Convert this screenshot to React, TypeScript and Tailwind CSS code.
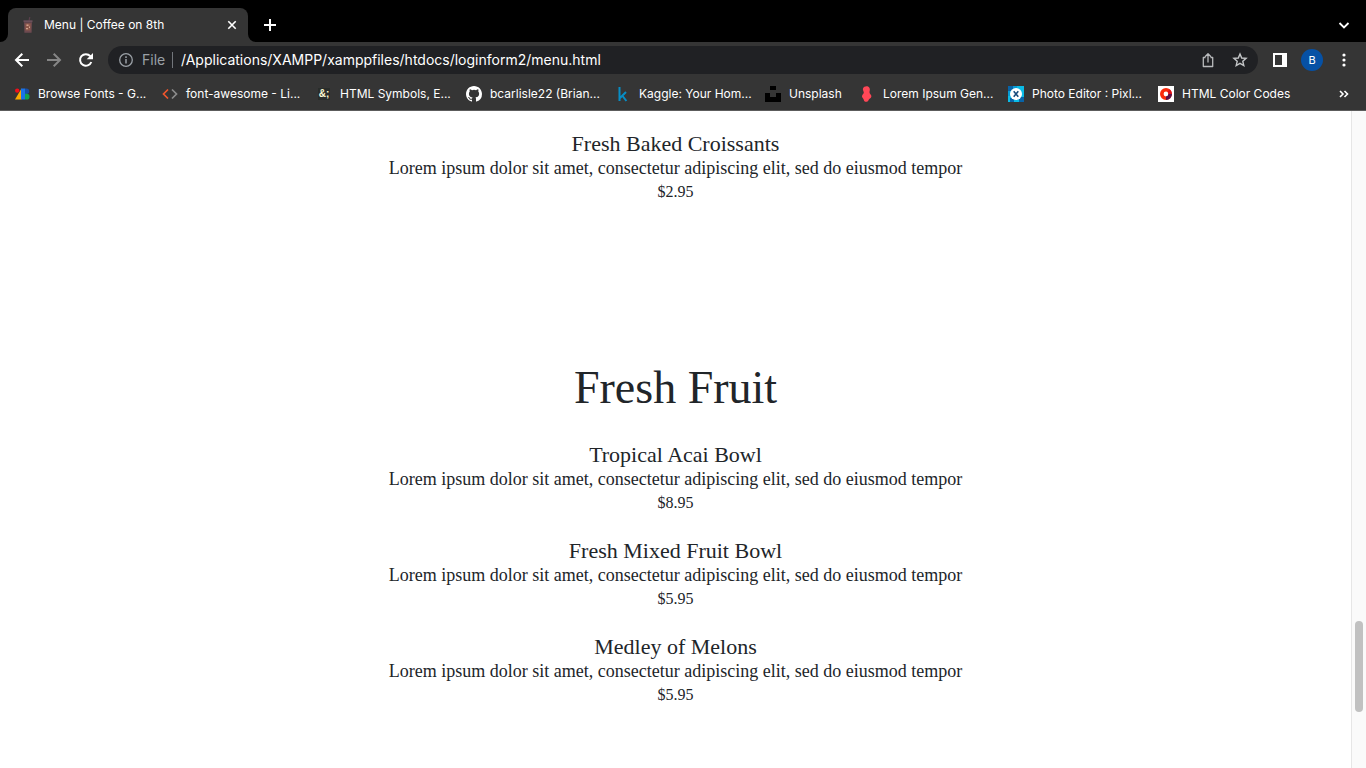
import type { ReactNode } from "react";

const DESCRIPTION =
  "Lorem ipsum dolor sit amet, consectetur adipiscing elit, sed do eiusmod tempor";

type Dish = { name: string; price: string };

const pastries: Dish[] = [{ name: "Fresh Baked Croissants", price: "$2.95" }];

const fruit: Dish[] = [
  { name: "Tropical Acai Bowl", price: "$8.95" },
  { name: "Fresh Mixed Fruit Bowl", price: "$5.95" },
  { name: "Medley of Melons", price: "$5.95" },
];

function Icon({ children }: { children: ReactNode }) {
  return (
    <svg viewBox="0 0 16 16" className="size-4 shrink-0" aria-hidden="true">
      {children}
    </svg>
  );
}

const bookmarks: { label: string; width: string; icon: ReactNode }[] = [
  {
    label: "Browse Fonts - G...",
    width: "w-[108px]",
    icon: (
      <Icon>
        <path d="M7.5 2.500v11H1z" fill="#fbab00" />
        <path d="M7 2.500h4v11H7z" fill="#1a73e8" />
        <circle cx="3.2" cy="4.6" r="2.2" fill="#f00f1a" />
        <path d="M11 2.500h1.500a2.700 2.700 0 0 1 0 5.400H11z" fill="#174ea6" />
        <path d="M11 7.800h1.700a2.850 2.850 0 0 1 0 5.700H11z" fill="#12a150" />
      </Icon>
    ),
  },
  {
    label: "font-awesome - Li...",
    width: "w-[114px]",
    icon: (
      <Icon>
        <path d="M6 3.5 1.5 8 6 12.5" fill="none" stroke="#f0562d" strokeWidth="1.7" />
        <path d="M10 3.5 14.5 8 10 12.5" fill="none" stroke="#8c8c8c" strokeWidth="1.7" />
      </Icon>
    ),
  },
  {
    label: "HTML Symbols, E...",
    width: "w-[110px]",
    icon: (
      <span className="flex size-4 shrink-0 items-center justify-center font-['Liberation_Sans',sans-serif] text-[10px] font-bold text-[#fbfbd5]">
        <span className="flex h-3 w-3 items-center justify-center bg-[#292d2b]">&amp;;</span>
      </span>
    ),
  },
  {
    label: "bcarlisle22 (Brian...",
    width: "w-[109px]",
    icon: (
      <Icon>
        <path
          fill="#fff"
          d="M8 0C3.58 0 0 3.58 0 8c0 3.54 2.29 6.53 5.47 7.59.4.07.55-.17.55-.38 0-.19-.01-.82-.01-1.49-2.01.37-2.53-.49-2.69-.94-.09-.23-.48-.94-.82-1.13-.28-.15-.68-.52-.01-.53.63-.01 1.08.58 1.23.82.72 1.21 1.87.87 2.33.66.07-.52.28-.87.51-1.07-1.78-.2-3.64-.89-3.64-3.95 0-.87.31-1.59.82-2.15-.08-.2-.36-1.02.08-2.12 0 0 .67-.21 2.2.82a7.42 7.42 0 0 1 4 0c1.53-1.04 2.2-.82 2.2-.82.44 1.1.16 1.92.08 2.12.51.56.82 1.27.82 2.15 0 3.07-1.87 3.75-3.65 3.95.29.25.54.73.54 1.48 0 1.07-.01 1.93-.01 2.2 0 .21.15.46.55.38A8.01 8.01 0 0 0 16 8c0-4.42-3.58-8-8-8z"
        />
      </Icon>
    ),
  },
  {
    label: "Kaggle: Your Hom...",
    width: "w-[110px]",
    icon: (
      <Icon>
        <path d="M4.500 1v14M11 6l-6 6M7.200 9.500l4.200 5.500" fill="none" stroke="#078dc5" strokeWidth="2" />
      </Icon>
    ),
  },
  {
    label: "Unsplash",
    width: "w-[54px]",
    icon: (
      <Icon>
        <path d="M5 0h6v4H5zM0 7h5v4h6V7h5v9H0z" fill="#000" />
      </Icon>
    ),
  },
  {
    label: "Lorem Ipsum Gen...",
    width: "w-[109px]",
    icon: (
      <Icon>
        <path
          d="M4 2.500C4.800.2 8.800-.5 10.200 1.600c1 1.300.6 2.500.4 3.600-.2 1.200-.2 2 .8 3 1.200 1.200 1.300 2.800.3 3.700-1.300 1-1.600.9-2.200 2.400-.9 2-4 2-4.600 0-.3-1-.4-1.300-1-2-1.100-1.100-1.300-2.400-.2-3.700.9-1 1.300-1.600 1-2.600-.4-1.200-1.100-2.200-.7-3.500z"
          fill="#ff4757"
        />
      </Icon>
    ),
  },
  {
    label: "Photo Editor : Pixl...",
    width: "w-[110px]",
    icon: (
      <Icon>
        <path d="M0 0h16v16H0z" fill="#0abbe6" />
        <path d="M0 0h5v5H0zM11 11h5v5h-5zM2 12h4v4H2z" fill="#0864a8" />
        <path d="M5 0h4v3H5zM0 5h2v5H0z" fill="#079bd4" />
        <circle cx="8" cy="8" r="6" fill="#fff" />
        <path d="m5.700 5.200 4.600 5.600M10.300 5.200l-4.600 5.600" stroke="#164b7c" strokeWidth="1.6" />
      </Icon>
    ),
  },
  {
    label: "HTML Color Codes",
    width: "w-[110px]",
    icon: (
      <Icon>
        <path d="M0 0h16v16H0z" fill="#fff" />
        <circle cx="8" cy="8" r="4.200" fill="none" stroke="#fa2a0c" strokeWidth="3.600" />
        <path d="M12.200 8A4.200 4.200 0 0 1 8 12.200" fill="none" stroke="#5c1249" strokeWidth="3.600" />
        <path d="M10.500 4.600A4.200 4.200 0 0 1 12.200 8" fill="none" stroke="#d9101c" strokeWidth="3.600" />
      </Icon>
    ),
  },
];

function TabStrip() {
  return (
    <div className="flex h-[42px] items-end bg-black">
      <div className="h-2 w-2 bg-[#353535]">
        <div className="h-2 w-2 rounded-br-lg bg-black" />
      </div>
      <div className="flex h-[34px] w-60 items-center rounded-t-lg bg-[#353535] pr-2 pl-3">
        <svg viewBox="0 0 16 16" className="size-4 shrink-0" aria-hidden="true">
          <path d="m9 4 .8-4" stroke="#5a3f4c" strokeWidth="1.200" />
          <path d="M3.500 3.300h9v1.900h-9z" fill="#6b505b" />
          <path d="M4 5.200h8l-.4 10.500H4.400z" fill="#6d4a50" />
          <path d="M5.300 6.500h5.400l-.3 7H5.600z" fill="#8e594a" />
          <path d="M6.500 7.500h2v1.500h-2zM9 9.500h1V11H9zM6 11h2v1.200H6z" fill="#d2a18d" />
        </svg>
        <span className="ml-2 flex-1 text-xs whitespace-nowrap text-white">Menu | Coffee on 8th</span>
        <button aria-label="Close tab" className="flex size-4 items-center justify-center">
          <svg viewBox="0 0 16 16" className="size-4">
            <path d="m4.300 4.300 7.400 7.400M11.700 4.300l-7.400 7.400" stroke="#fff" strokeWidth="1.6" />
          </svg>
        </button>
      </div>
      <div className="h-2 w-2 bg-[#353535]">
        <div className="h-2 w-2 rounded-bl-lg bg-black" />
      </div>
      <button aria-label="New tab" className="mb-2 ml-[5px] flex size-[18px] items-center justify-center">
        <svg viewBox="0 0 18 18" className="size-[18px]">
          <path d="M9 3v12M3 9h12" stroke="#fff" strokeWidth="2" />
        </svg>
      </button>
      <button aria-label="Search tabs" className="mr-3.5 mb-2 ml-auto flex size-4">
        <svg viewBox="0 0 16 16" className="size-4">
          <path d="m3.500 5 4.500 4.500L12.500 5" fill="none" stroke="#fff" strokeWidth="1.800" />
        </svg>
      </button>
    </div>
  );
}

function Toolbar() {
  return (
    <div className="flex h-9 items-center bg-[#353535] pl-3.5">
      <div className="flex shrink-0 gap-4">
        <button aria-label="Back">
          <svg viewBox="0 0 16 16" className="size-4">
            <path d="M15 8H2.500M8.300 1.700 2 8l6.300 6.300" fill="none" stroke="#fff" strokeWidth="2" />
          </svg>
        </button>
        <button aria-label="Forward">
          <svg viewBox="0 0 16 16" className="size-4">
            <path d="M1 8h12.500M7.700 1.700 14 8l-6.300 6.300" fill="none" stroke="#868686" strokeWidth="2" />
          </svg>
        </button>
        <button aria-label="Reload">
          <svg viewBox="0 0 16 16" className="size-4">
            <path d="M13.300 10a5.800 5.800 0 1 1-1-5.800L14 6" fill="none" stroke="#fff" strokeWidth="2" />
            <path d="M15 1v6.300H8.700z" fill="#fff" />
          </svg>
        </button>
      </div>
      <div className="ml-3.5 flex h-7 min-w-0 flex-1 items-center rounded-full bg-[#202124] pr-2.5 pl-2.5 text-sm">
        <svg viewBox="0 0 16 16" className="size-4 shrink-0" aria-hidden="true">
          <circle cx="8" cy="8" r="6.300" fill="none" stroke="#9aa0a6" strokeWidth="1.300" />
          <path d="M8 7v4.500M8 4.300v1.600" stroke="#9aa0a6" strokeWidth="1.500" />
        </svg>
        <span className="ml-2 w-[30px] shrink-0 text-[#9aa0a6]">File</span>
        <span className="h-4 w-px shrink-0 bg-[#72767b]" />
        <input
          aria-label="Address"
          defaultValue="/Applications/XAMPP/xamppfiles/htdocs/loginform2/menu.html"
          className="ml-2 min-w-0 flex-1 bg-transparent text-white outline-none"
        />
        <div className="flex shrink-0 gap-4">
          <button aria-label="Share">
            <svg viewBox="0 0 16 16" className="size-4">
              <path
                d="M5.500 5.500h-2.200v9h9.400v-9h-2.200M8 10.500V2M5 4.700l3-3 3 3"
                fill="none"
                stroke="#b8babc"
                strokeWidth="1.300"
                strokeLinejoin="round"
              />
            </svg>
          </button>
          <button aria-label="Bookmark this page">
            <svg viewBox="0 0 16 16" className="size-4">
              <path
                d="m8 2 1.700 4 4.400.4-3.300 2.900 1 4.200L8 11.300l-3.800 2.200 1-4.200-3.300-2.900L6.300 6z"
                fill="none"
                stroke="#c4c6c8"
                strokeWidth="1.400"
              />
            </svg>
          </button>
        </div>
      </div>
      <div className="mr-3.5 ml-3.5 flex shrink-0 items-center gap-[13px]">
        <button aria-label="Side panel">
          <svg viewBox="0 0 16 16" className="size-4">
            <path d="M1 1h14v14H1zM3 3v10h7V3z" fill="#fff" fillRule="evenodd" />
          </svg>
        </button>
        <button
          aria-label="Profile"
          className="flex size-[22px] items-center justify-center rounded-full bg-[#0651a5] text-[11px] text-white"
        >
          B
        </button>
        <button aria-label="More">
          <svg viewBox="0 0 16 16" className="size-4" fill="#fff">
            <circle cx="8" cy="3" r="1.600" />
            <circle cx="8" cy="8" r="1.600" />
            <circle cx="8" cy="13" r="1.600" />
          </svg>
        </button>
      </div>
    </div>
  );
}

function BookmarksBar() {
  return (
    <nav className="flex h-[33px] items-center border-b border-[#5c5c5c] bg-[#353535] pl-3.5 text-xs text-white">
      <div className="flex min-w-0 flex-1 items-center gap-4 overflow-hidden">
        {bookmarks.map((b) => (
          <a key={b.label} href="#" className="flex shrink-0 items-center gap-2">
            {b.icon}
            <span className={`${b.width} whitespace-nowrap`}>{b.label}</span>
          </a>
        ))}
      </div>
      <button aria-label="More bookmarks" className="mr-3.5">
        <svg viewBox="0 0 16 16" className="size-4">
          <path d="m4 5 3 3-3 3M8.500 5l3 3-3 3" fill="none" stroke="#fff" strokeWidth="1.600" />
        </svg>
      </button>
    </nav>
  );
}

function DishList({ dishes }: { dishes: Dish[] }) {
  return (
    <div className="flex flex-col gap-6">
      {dishes.map((dish) => (
        <article key={dish.name}>
          <h2 className="text-[22px] leading-6">{dish.name}</h2>
          <p className="text-lg leading-6">{DESCRIPTION}</p>
          <p className="text-base leading-6">{dish.price}</p>
        </article>
      ))}
    </div>
  );
}

export default function App() {
  return (
    <div className="flex h-screen flex-col overflow-hidden bg-white font-['Inter',sans-serif]">
      <header className="shrink-0">
        <TabStrip />
        <Toolbar />
        <BookmarksBar />
      </header>
      <div className="flex min-h-0 flex-1">
        <main className="min-w-0 flex-1 overflow-hidden pt-[21px] text-center font-['Liberation_Serif',serif] text-[#212529]">
          <DishList dishes={pastries} />
          <h1 className="mt-40 mb-[31px] text-[46px] leading-12">Fresh Fruit</h1>
          <DishList dishes={fruit} />
        </main>
        <div className="flex w-[15px] shrink-0 flex-col items-center border-l border-[#e6e6e6] bg-[#fafafa]">
          <div className="flex-[510]" />
          <div className="h-[91px] w-2 rounded-full bg-[#c1c1c1]" />
          <div className="flex-[56]" />
        </div>
      </div>
    </div>
  );
}
